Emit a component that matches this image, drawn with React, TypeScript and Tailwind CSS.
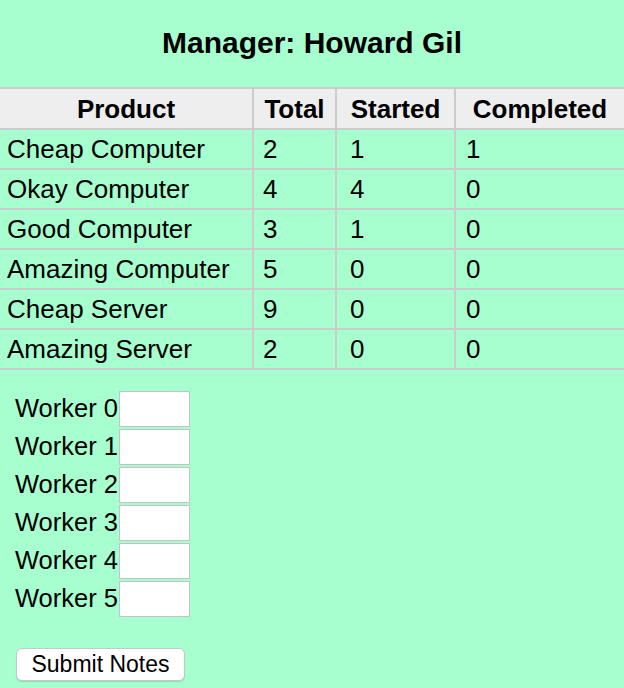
const products = [
  { name: "Cheap Computer", total: 2, started: 1, completed: 1 },
  { name: "Okay Computer", total: 4, started: 4, completed: 0 },
  { name: "Good Computer", total: 3, started: 1, completed: 0 },
  { name: "Amazing Computer", total: 5, started: 0, completed: 0 },
  { name: "Cheap Server", total: 9, started: 0, completed: 0 },
  { name: "Amazing Server", total: 2, started: 0, completed: 0 },
];

const workers = [0, 1, 2, 3, 4, 5];

export default function App() {
  return (
    <div
      className="min-h-[688px] w-[624px] overflow-hidden bg-[#a7fecf] text-black"
      style={{ fontFamily: '"Liberation Sans", Arial, sans-serif' }}
    >
      <h1 className="flex h-[87px] items-center justify-center pb-[2px] text-[30px] font-bold">
        Manager: Howard Gil
      </h1>

      <table className="w-[624px] table-fixed border-collapse text-[26px] leading-[30px]">
        <colgroup>
          <col className="w-[253px]" />
          <col className="w-[83px]" />
          <col className="w-[119px]" />
          <col className="w-[169px]" />
        </colgroup>
        <thead>
          <tr className="h-[41px] bg-[#eeeeee]">
            {["Product", "Total", "Started", "Completed"].map((h, i) => (
              <th
                key={h}
                className={`border-2 border-[#cccccc] p-0 text-center font-bold ${
                  i === 0 ? "border-l-0" : ""
                } ${i === 3 ? "border-r-0" : ""}`}
              >
                {h}
              </th>
            ))}
          </tr>
        </thead>
        <tbody>
          {products.map((p) => (
            <tr key={p.name} className="h-[40px]">
              <td className="border-2 border-l-0 border-[#cccccc] py-0 pl-[7px]">{p.name}</td>
              <td className="border-2 border-[#cccccc] py-0 pl-[9px]">{p.total}</td>
              <td className="border-2 border-[#cccccc] py-0 pl-[13px]">{p.started}</td>
              <td className="border-2 border-r-0 border-[#cccccc] py-0 pl-[10px]">{p.completed}</td>
            </tr>
          ))}
        </tbody>
      </table>

      <div className="flex flex-col pl-[15px] pt-[20px] text-[25.5px]">
        {workers.map((w) => (
          <div key={w} className="flex h-[38px] items-center">
            <span className="leading-none">Worker {w}</span>
            <input
              type="text"
              className="ml-[1px] h-[36px] w-[71px] border border-[#c4c4c4] bg-white outline-none"
            />
          </div>
        ))}
      </div>

      <div className="pl-[16px] pt-[30px]">
        <button className="h-[33px] w-[169px] rounded-[6px] border border-[#c8c8c8] bg-white text-[23px] leading-none shadow-[0_1px_1px_rgba(0,0,0,0.15)]">
          Submit Notes
        </button>
      </div>
    </div>
  );
}
